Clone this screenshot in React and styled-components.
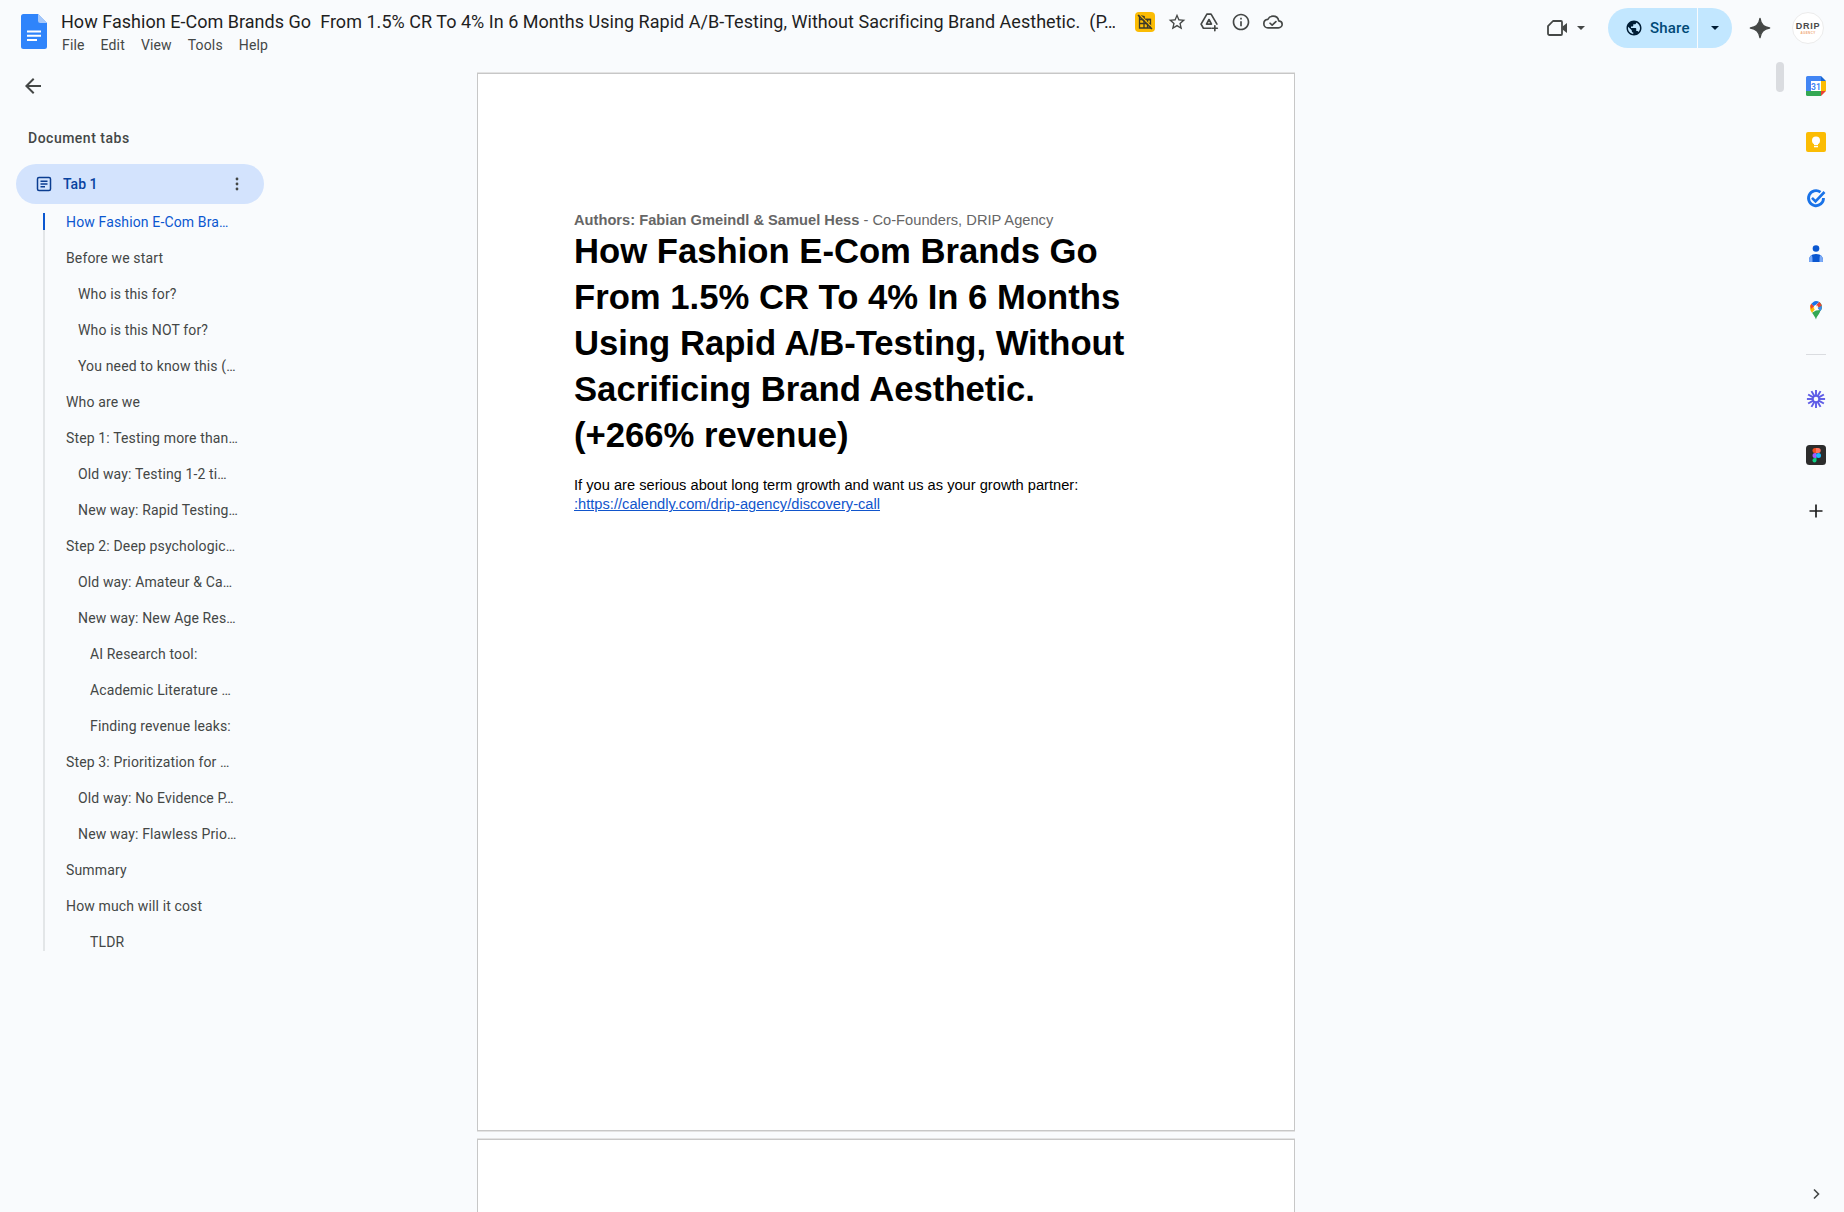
import React from "react";
import styled, { createGlobalStyle } from "styled-components";

const Global = createGlobalStyle`
  html, body { margin: 0; padding: 0; background: #f9fbfd; }
  * { box-sizing: border-box; }
`;

const Shell = styled.div`
  width: 100%;
  height: 100vh;
  overflow: hidden;
  display: flex;
  flex-direction: column;
  background: #f9fbfd;
  font-family: Roboto, "Liberation Sans", sans-serif;
  color: #444746;
`;

const Header = styled.header`
  height: 58px;
  flex: none;
  display: flex;
  align-items: flex-start;
  padding-left: 21px;
`;

const DocsLogo = styled.svg`
  width: 26px;
  height: 35px;
  margin-top: 14px;
  flex: none;
`;

const TitleBlock = styled.div`
  margin-left: 14px;
  padding-top: 10px;
  display: flex;
  flex-direction: column;
`;

const TitleRow = styled.div`
  display: flex;
  align-items: center;
  height: 24px;
  gap: 12px;
`;

const DocTitle = styled.div`
  width: 1054px;
  margin-right: 8px;
  font-size: 18px;
  line-height: 24px;
  letter-spacing: 0.03px;
  color: #1f1f1f;
  white-space: pre;
  overflow: hidden;
`;

const Menu = styled.nav`
  display: flex;
  gap: 16px;
  height: 18px;
  margin-top: 2px;
  padding-left: 1px;
  font-size: 14px;
  line-height: 18px;
  letter-spacing: 0.15px;
  color: #444746;
`;

const Badge = styled.span`
  width: 20px;
  height: 20px;
  border-radius: 4px;
  background: #fbbc04;
  display: flex;
  align-items: center;
  justify-content: center;
`;

const ToolIcon = styled.svg`
  width: 20px;
  height: 20px;
  flex: none;
  color: #444746;
`;

const RightGroup = styled.div`
  margin-left: auto;
  margin-top: 8px;
  padding-right: 20px;
  height: 40px;
  display: flex;
  align-items: center;
`;

const VideoIcon = styled.svg`
  width: 20px;
  height: 18px;
  color: #444746;
`;

const Caret = styled.span`
  width: 0;
  height: 0;
  border-left: 4px solid transparent;
  border-right: 4px solid transparent;
  border-top: 4px solid ${(p) => p.$color || "#444746"};
  margin-left: ${(p) => p.$offset || 0}px;
`;

const SharePill = styled.div`
  margin-left: 23px;
  width: 124px;
  height: 40px;
  border-radius: 20px;
  background: #c2e7ff;
  display: flex;
  overflow: hidden;
  color: #004a77;
`;

const ShareMain = styled.div`
  width: 90px;
  display: flex;
  align-items: center;
  padding-left: 17px;
  gap: 7px;
  font-size: 15px;
  font-weight: 500;
  letter-spacing: 0.2px;
  border-right: 1px solid #f9fbfd;
  flex: none;
`;

const ShareMore = styled.div`
  flex: 1;
  display: flex;
  align-items: center;
  justify-content: center;
`;

const GeminiIcon = styled.svg`
  width: 22px;
  height: 22px;
  margin-left: 17px;
  color: #444746;
`;

const Avatar = styled.div`
  width: 32px;
  height: 32px;
  margin-left: 21px;
  border-radius: 50%;
  background: #fff;
  border: 1px solid #ececec;
  display: flex;
  flex-direction: column;
  align-items: center;
  justify-content: center;
  font-family: "Liberation Sans", sans-serif;
`;

const AvatarName = styled.span`
  font-size: 9px;
  line-height: 9px;
  font-weight: 700;
  color: #4a4a4a;
  letter-spacing: 0.8px;
`;

const AvatarSub = styled.span`
  font-size: 3px;
  line-height: 4px;
  font-weight: 700;
  color: #f0a875;
  letter-spacing: 0.4px;
`;

const Main = styled.div`
  flex: 1;
  min-height: 0;
  display: flex;
`;

const Sidebar = styled.aside`
  width: 477px;
  flex: none;
  padding-left: 16px;
`;

const BackRow = styled.div`
  height: 56px;
  display: flex;
  align-items: center;
  padding-left: 5px;
  color: #444746;
`;

const BackIcon = styled.svg`
  width: 24px;
  height: 24px;
`;

const SideTitle = styled.div`
  margin-top: 14px;
  padding-left: 12px;
  height: 20px;
  font-size: 14px;
  font-weight: 500;
  line-height: 20px;
  letter-spacing: 0.5px;
  color: #444746;
`;

const TabPill = styled.div`
  margin-top: 16px;
  width: 248px;
  height: 40px;
  border-radius: 20px;
  background: #d3e3fd;
  display: flex;
  align-items: center;
  padding-left: 20px;
  padding-right: 19px;
  font-size: 14px;
  font-weight: 500;
  color: #0842a0;
`;

const TabLabel = styled.span`
  margin-left: 11px;
  flex: 1;
`;

const TabIcon = styled.svg`
  width: 16px;
  height: 16px;
  color: #0b3d91;
`;

const KebabIcon = styled.svg`
  width: 16px;
  height: 16px;
  color: #444746;
`;

const Outline = styled.ul`
  list-style: none;
  margin: 9px 0 0 27px;
  padding: 0 0 0 21px;
  width: 200px;
  border-left: 2px solid #e3e6e8;
  display: flex;
  flex-direction: column;
  gap: 18px;
`;

const OutlineItem = styled.li`
  position: relative;
  height: 18px;
  padding-left: ${(p) => p.$level * 12}px;
  font-size: 14px;
  line-height: 18px;
  letter-spacing: 0.14px;
  white-space: nowrap;
  color: ${(p) => (p.$active ? "#0b57d0" : "#444746")};
  &::before {
    content: "";
    display: ${(p) => (p.$active ? "block" : "none")};
    position: absolute;
    left: -23px;
    top: 0;
    width: 2px;
    height: 17px;
    background: #0b57d0;
  }
`;

const Pages = styled.main`
  width: 818px;
  flex: none;
  padding-top: 15px;
`;

const Sheet = styled.section`
  background: #fff;
  height: 1058px;
  margin-bottom: 8px;
  border: 1px solid #c7c7c7;
  box-shadow: 0 1px 0 #e3e3e3, 0 -1px 0 #e3e3e3;
  padding: 137px 96px 0;
  font-family: "Liberation Sans", Arial, sans-serif;
`;

const Authors = styled.div`
  font-size: 14.67px;
  line-height: 18.4px;
  letter-spacing: 0.01px;
  color: #666;
`;

const Heading = styled.h1`
  margin: 0;
  font-size: 34.67px;
  line-height: 45.8px;
  font-weight: 700;
  color: #000;
`;

const Para = styled.p`
  margin: 18px 0 0;
  font-size: 14.67px;
  line-height: 19px;
  color: #000;
`;

const DocLink = styled.span`
  color: #1155cc;
  text-decoration: underline;
`;

const Gutter = styled.div`
  flex: 1;
  display: flex;
  justify-content: flex-end;
  padding: 4px 4px 0 0;
`;

const ScrollThumb = styled.div`
  width: 8px;
  height: 30px;
  border-radius: 4px;
  background: #dadce0;
`;

const Rail = styled.aside`
  width: 56px;
  flex: none;
  display: flex;
  flex-direction: column;
  align-items: center;
`;

const RailSlot = styled.div`
  width: 56px;
  height: 56px;
  flex: none;
  display: flex;
  align-items: center;
  justify-content: center;
`;

const RailDivider = styled.div`
  width: 20px;
  height: 1px;
  flex: none;
  margin: 16px 0;
  background: #dadce0;
`;

const RailFooter = styled.div`
  margin-top: auto;
  height: 26px;
  display: flex;
  align-items: flex-start;
  justify-content: center;
  width: 56px;
  color: #444746;
`;

const RailIcon = styled.svg`
  width: ${(p) => p.$s || 20}px;
  height: ${(p) => p.$s || 20}px;
`;

const Logo = () => (
  <DocsLogo viewBox="0 0 26 35">
    <path d="M2.5 0H17l9 9v23.5a2.5 2.5 0 0 1-2.5 2.5h-21A2.5 2.5 0 0 1 0 32.5v-30A2.5 2.5 0 0 1 2.5 0z" fill="#2f84fb" />
    <path d="M17 0l9 9h-6.8A2.2 2.2 0 0 1 17 6.8z" fill="#a6c8fa" />
    <path d="M6 16.6h14v2H6zM6 20.8h14v2H6zM6 25h10v2H6z" fill="#fff" />
  </DocsLogo>
);

const NoGrid = () => (
  <svg width="16" height="16" viewBox="0 0 16 16" fill="none" stroke="#3c3a2a" strokeWidth="1.3">
    <path d="M2.5 1.5v12.5h11V5.5H7V2.5z" />
    <path d="M2.5 5.5h11M2.5 9.5h11M7 2.5v11.5M10.5 5.5v8.5" />
    <path d="M2.2 0.4l14 14" stroke="#fbbc04" strokeWidth="1.2" />
    <path d="M1 1l14 14" strokeWidth="1.5" />
  </svg>
);

const StarOutline = () => (
  <ToolIcon viewBox="0 0 24 24" fill="currentColor">
    <path d="M22 9.24l-7.19-.62L12 2 9.19 8.63 2 9.24l5.46 4.73L5.82 21 12 17.27 18.18 21l-1.63-7.03L22 9.24zM12 15.4l-3.76 2.27 1-4.28-3.32-2.88 4.38-.38L12 6.1l1.71 4.04 4.38.38-3.32 2.88 1 4.28L12 15.4z" />
  </ToolIcon>
);

const DriveAdd = () => (
  <ToolIcon viewBox="0 0 24 24" fill="none" stroke="currentColor" strokeWidth="2" strokeLinejoin="round" strokeLinecap="round">
    <path d="M9.5 2.5h5L21.5 14.5M9.5 2.5L2.5 14.5l2.8 5h9.2M9 14.5h6L12 9z" />
    <path d="M19 16.5v6M16 19.5h6" />
  </ToolIcon>
);

const InfoOutline = () => (
  <ToolIcon viewBox="0 0 24 24" fill="currentColor">
    <path d="M11 7h2v2h-2zm0 4h2v6h-2zm1-9C6.48 2 2 6.48 2 12s4.48 10 10 10 10-4.48 10-10S17.52 2 12 2zm0 18c-4.41 0-8-3.59-8-8s3.59-8 8-8 8 3.59 8 8-3.59 8-8 8z" />
  </ToolIcon>
);

const CloudDone = () => (
  <ToolIcon viewBox="0 0 24 24" fill="none" stroke="currentColor" strokeWidth="2" strokeLinejoin="round" strokeLinecap="round">
    <path d="M18.9 10.6C18.3 7.4 15.4 5 12 5 9.3 5 7 6.5 5.8 8.8 3.1 9.1 1 11.3 1 14c0 2.8 2.2 5 5 5h12.500c2.500 0 4.500-2 4.500-4.300 0-2.300-1.800-3.900-4.100-4.100z" />
    <path d="M8.500 13.500l2.500 2.300 4.500-4.300" />
  </ToolIcon>
);

const Video = () => (
  <VideoIcon viewBox="0 0 20 18" fill="none">
    <path d="M6 2h8a1 1 0 0 1 1 1v12a1 1 0 0 1-1 1H2.500A1.500 1.500 0 0 1 1 14.500V7.200z" stroke="currentColor" strokeWidth="1.800" strokeLinejoin="round" />
    <path d="M15.500 7.500L20 4v10l-4.500-3.500z" fill="currentColor" />
  </VideoIcon>
);

const Globe = () => (
  <svg width="18" height="18" viewBox="0 0 24 24" fill="#001d35">
    <path d="M12 2C6.48 2 2 6.48 2 12s4.48 10 10 10 10-4.48 10-10S17.52 2 12 2zm-1 17.93c-3.95-.49-7-3.85-7-7.930 0-.62.08-1.210.21-1.790L9 15v1c0 1.100.9 2 2 2v1.930zm6.900-2.540c-.26-.81-1-1.390-1.900-1.390h-1v-3c0-.55-.45-1-1-1H8v-2h2c.55 0 1-.45 1-1V7h2c1.100 0 2-.9 2-2v-.41c2.930 1.190 5 4.060 5 7.410 0 2.080-.8 3.970-2.100 5.390z" />
  </svg>
);

const Gemini = () => (
  <GeminiIcon viewBox="0 0 24 24" fill="currentColor">
    <path d="M12 1.500C12.800 7.800 16.200 11.200 22.500 12 16.200 12.800 12.800 16.200 12 22.500 11.200 16.200 7.800 12.800 1.500 12 7.800 11.200 11.200 7.800 12 1.500z" stroke="currentColor" strokeWidth="1.500" strokeLinejoin="round" />
  </GeminiIcon>
);

const Back = () => (
  <BackIcon viewBox="0 0 24 24" fill="currentColor">
    <path d="M20 11H7.830l5.590-5.590L12 4l-8 8 8 8 1.410-1.410L7.830 13H20v-2z" />
  </BackIcon>
);

const TabDoc = () => (
  <TabIcon viewBox="0 0 16 16" fill="none" stroke="currentColor" strokeWidth="1.500">
    <rect x="1.500" y="1.500" width="13" height="13" rx="1.500" />
    <path d="M4.500 5.200h7M4.500 8h7M4.500 10.800h4.500" />
  </TabIcon>
);

const Kebab = () => (
  <KebabIcon viewBox="0 0 16 16" fill="currentColor">
    <circle cx="8" cy="3" r="1.400" />
    <circle cx="8" cy="8" r="1.400" />
    <circle cx="8" cy="13" r="1.400" />
  </KebabIcon>
);

const CalendarApp = () => (
  <RailIcon viewBox="0 0 20 20">
    <path d="M1.500 0H15v5H5v10H0V1.500A1.500 1.500 0 0 1 1.500 0z" fill="#4285f4" />
    <path d="M15 0l5 5h-5z" fill="#1967d2" />
    <path d="M15 5h5v10h-5z" fill="#fbbc04" />
    <path d="M5 15h10v5H1.500A1.500 1.500 0 0 1 0 18.500V15h5z" fill="#34a853" />
    <path d="M15 15h5l-5 5z" fill="#ea4335" />
    <rect x="5" y="5" width="10" height="10" fill="#fff" />
    <text x="10" y="13.500" textAnchor="middle" fontSize="8.500" fontWeight="700" fontFamily="Roboto, sans-serif" fill="#4285f4">31</text>
  </RailIcon>
);

const KeepApp = () => (
  <RailIcon viewBox="0 0 20 20">
    <rect width="20" height="20" rx="2" fill="#fbbc04" />
    <circle cx="10" cy="8.500" r="4" fill="#fff" />
    <rect x="8" y="11" width="4" height="2" fill="#fff" />
    <rect x="8" y="13.800" width="4" height="1.500" fill="#fff" />
  </RailIcon>
);

const TasksApp = () => (
  <RailIcon viewBox="0 0 20 20" fill="none">
    <path d="M14.500 4.200A7.500 7.500 0 1 0 17.500 10" stroke="#1a73e8" strokeWidth="2.800" />
    <path d="M6 9.800l3.500 3.500 9-9.300" stroke="#1a73e8" strokeWidth="2.600" />
  </RailIcon>
);

const ContactsApp = () => (
  <RailIcon viewBox="0 0 20 20">
    <circle cx="10" cy="4.500" r="3.300" fill="#0b57d0" />
    <path d="M3 16.500c0-4 2.200-6.500 7-6.500s7 2.500 7 6.500c0 1-.7 1.500-1.500 1.500h-11C3.700 18 3 17.500 3 16.500z" fill="#0b57d0" />
    <path d="M3 16.500c0-2.500.9-4.500 2.800-5.500.8 2 .7 4.500.7 7h-2C3.700 18 3 17.500 3 16.500z" fill="#7baaf7" />
    <path d="M17 16.500c0-2.500-.9-4.500-2.800-5.500-.8 2-.7 4.500-.7 7h2c.8 0 1.500-.5 1.500-1.500z" fill="#7baaf7" />
  </RailIcon>
);

const MapsApp = () => (
  <RailIcon viewBox="0 0 20 20">
    <path d="M10 19.500c-1-3-2.500-4.500-4-6.800l4-2.200 4.500-.500c-.4 3.700-3.500 5.500-4.500 9.500z" fill="#34a853" />
    <path d="M6 12.700C5 11.300 4 10 4 7.500 4 6 4.500 4.800 5.400 3.800L10 8z" fill="#fbbc04" />
    <path d="M5.400 3.800L8 6.300 5.200 9 4.200 6z" fill="#ea4335" />
    <path d="M5.400 3.800C6.500 2.700 8.100 1 10 1c1.200 0 2.400.4 3.300 1.100L8 6.300z" fill="#1a73e8" />
    <path d="M13.300 2.100C15 3.200 16 5.200 16 7.500c0 1.200-.5 2.400-1.500 3.500L10 6.500z" fill="#34a853" />
    <path d="M13.300 2.100C14.300 3 15.400 4.300 15.700 5.800L12 7.500 9.800 5.500z" fill="#ea4335" />
    <path d="M15.800 6c.2 1.800-.3 3.500-1.300 5l-3-3z" fill="#4285f4" />
    <circle cx="10" cy="7.500" r="2.300" fill="#fff" opacity="0.85" />
  </RailIcon>
);

const StarburstApp = () => (
  <RailIcon viewBox="0 0 22 22" fill="none" stroke="#5e5ce6" strokeWidth="2.100">
    <circle cx="11" cy="11" r="3.600" />
    {[0, 30, 60, 90, 120, 150, 180, 210, 240, 270, 300, 330].map((a) => (
      <path key={a} d="M11 1v6" transform={`rotate(${a} 11 11)`} />
    ))}
  </RailIcon>
);

const FigmaApp = () => (
  <RailIcon viewBox="0 0 20 20">
    <rect width="20" height="20" rx="3.500" fill="#2c2c2c" />
    <path d="M6.500 5.500A2.500 2.500 0 0 1 9 3h2v5H9a2.500 2.500 0 0 1-2.500-2.500z" fill="#f24e1e" />
    <path d="M10 3h2.200a2.500 2.500 0 0 1 0 5H10z" fill="#ff7262" />
    <path d="M6.500 10.500A2.500 2.500 0 0 1 9 8h1.500v5H9a2.500 2.500 0 0 1-2.500-2.500z" fill="#a259ff" />
    <circle cx="12.500" cy="10.500" r="2.500" fill="#1abcfe" />
    <path d="M6.500 15.500A2.500 2.500 0 0 1 9 13h1.500v2.500a2 2 0 0 1-4 0z" fill="#0acf83" />
  </RailIcon>
);

const PlusIcon = () => (
  <RailIcon $s={16} viewBox="0 0 16 16" fill="none" stroke="#1f1f1f" strokeWidth="1.700">
    <path d="M8 1.500v13M1.500 8h13" />
  </RailIcon>
);

const ChevronIcon = () => (
  <RailIcon $s={16} viewBox="0 0 16 16" fill="none" stroke="currentColor" strokeWidth="1.600">
    <path d="M6 3.500L10.500 8 6 12.500" />
  </RailIcon>
);

const outline = [
  ["How Fashion E-Com Bra…", 0, true],
  ["Before we start", 0],
  ["Who is this for?", 1],
  ["Who is this NOT for?", 1],
  ["You need to know this (…", 1],
  ["Who are we", 0],
  ["Step 1: Testing more than…", 0],
  ["Old way: Testing 1-2 ti…", 1],
  ["New way: Rapid Testing…", 1],
  ["Step 2: Deep psychologic…", 0],
  ["Old way: Amateur & Ca…", 1],
  ["New way: New Age Res…", 1],
  ["AI Research tool:", 2],
  ["Academic Literature …", 2],
  ["Finding revenue leaks:", 2],
  ["Step 3: Prioritization for …", 0],
  ["Old way: No Evidence P…", 1],
  ["New way: Flawless Prio…", 1],
  ["Summary", 0],
  ["How much will it cost", 0],
  ["TLDR", 2],
];

export default function App() {
  return (
    <Shell>
      <Global />
      <Header>
        <Logo />
        <TitleBlock>
          <TitleRow>
            <DocTitle>How Fashion E-Com Brands Go  From 1.5% CR To 4% In 6 Months Using Rapid A/B-Testing, Without Sacrificing Brand Aesthetic.  (P…</DocTitle>
            <Badge><NoGrid /></Badge>
            <StarOutline />
            <DriveAdd />
            <InfoOutline />
            <CloudDone />
          </TitleRow>
          <Menu>
            <span>File</span>
            <span>Edit</span>
            <span>View</span>
            <span>Tools</span>
            <span>Help</span>
          </Menu>
        </TitleBlock>
        <RightGroup>
          <Video />
          <Caret $offset={10} />
          <SharePill>
            <ShareMain>
              <Globe />
              Share
            </ShareMain>
            <ShareMore><Caret $color="#001d35" /></ShareMore>
          </SharePill>
          <Gemini />
          <Avatar>
            <AvatarName>DRIP</AvatarName>
            <AvatarSub>AGENCY</AvatarSub>
          </Avatar>
        </RightGroup>
      </Header>
      <Main>
        <Sidebar>
          <BackRow><Back /></BackRow>
          <SideTitle>Document tabs</SideTitle>
          <TabPill>
            <TabDoc />
            <TabLabel>Tab 1</TabLabel>
            <Kebab />
          </TabPill>
          <Outline>
            {outline.map(([label, level, active]) => (
              <OutlineItem key={label} $level={level} $active={active}>{label}</OutlineItem>
            ))}
          </Outline>
        </Sidebar>
        <Pages>
          <Sheet>
            <Authors><b>Authors: Fabian Gmeindl &amp; Samuel Hess</b> - Co-Founders, DRIP Agency</Authors>
            <Heading>
              How Fashion E-Com Brands Go<br />
              From 1.5% CR To 4% In 6 Months<br />
              Using Rapid A/B-Testing, Without<br />
              Sacrificing Brand Aesthetic.<br />
              (+266% revenue)
            </Heading>
            <Para>
              If you are serious about long term growth and want us as your growth partner:<br />
              <DocLink>:https://calendly.com/drip-agency/discovery-call</DocLink>
            </Para>
          </Sheet>
          <Sheet />
        </Pages>
        <Gutter><ScrollThumb /></Gutter>
        <Rail>
          <RailSlot><CalendarApp /></RailSlot>
          <RailSlot><KeepApp /></RailSlot>
          <RailSlot><TasksApp /></RailSlot>
          <RailSlot><ContactsApp /></RailSlot>
          <RailSlot><MapsApp /></RailSlot>
          <RailDivider />
          <RailSlot><StarburstApp /></RailSlot>
          <RailSlot><FigmaApp /></RailSlot>
          <RailSlot><PlusIcon /></RailSlot>
          <RailFooter><ChevronIcon /></RailFooter>
        </Rail>
      </Main>
    </Shell>
  );
}
